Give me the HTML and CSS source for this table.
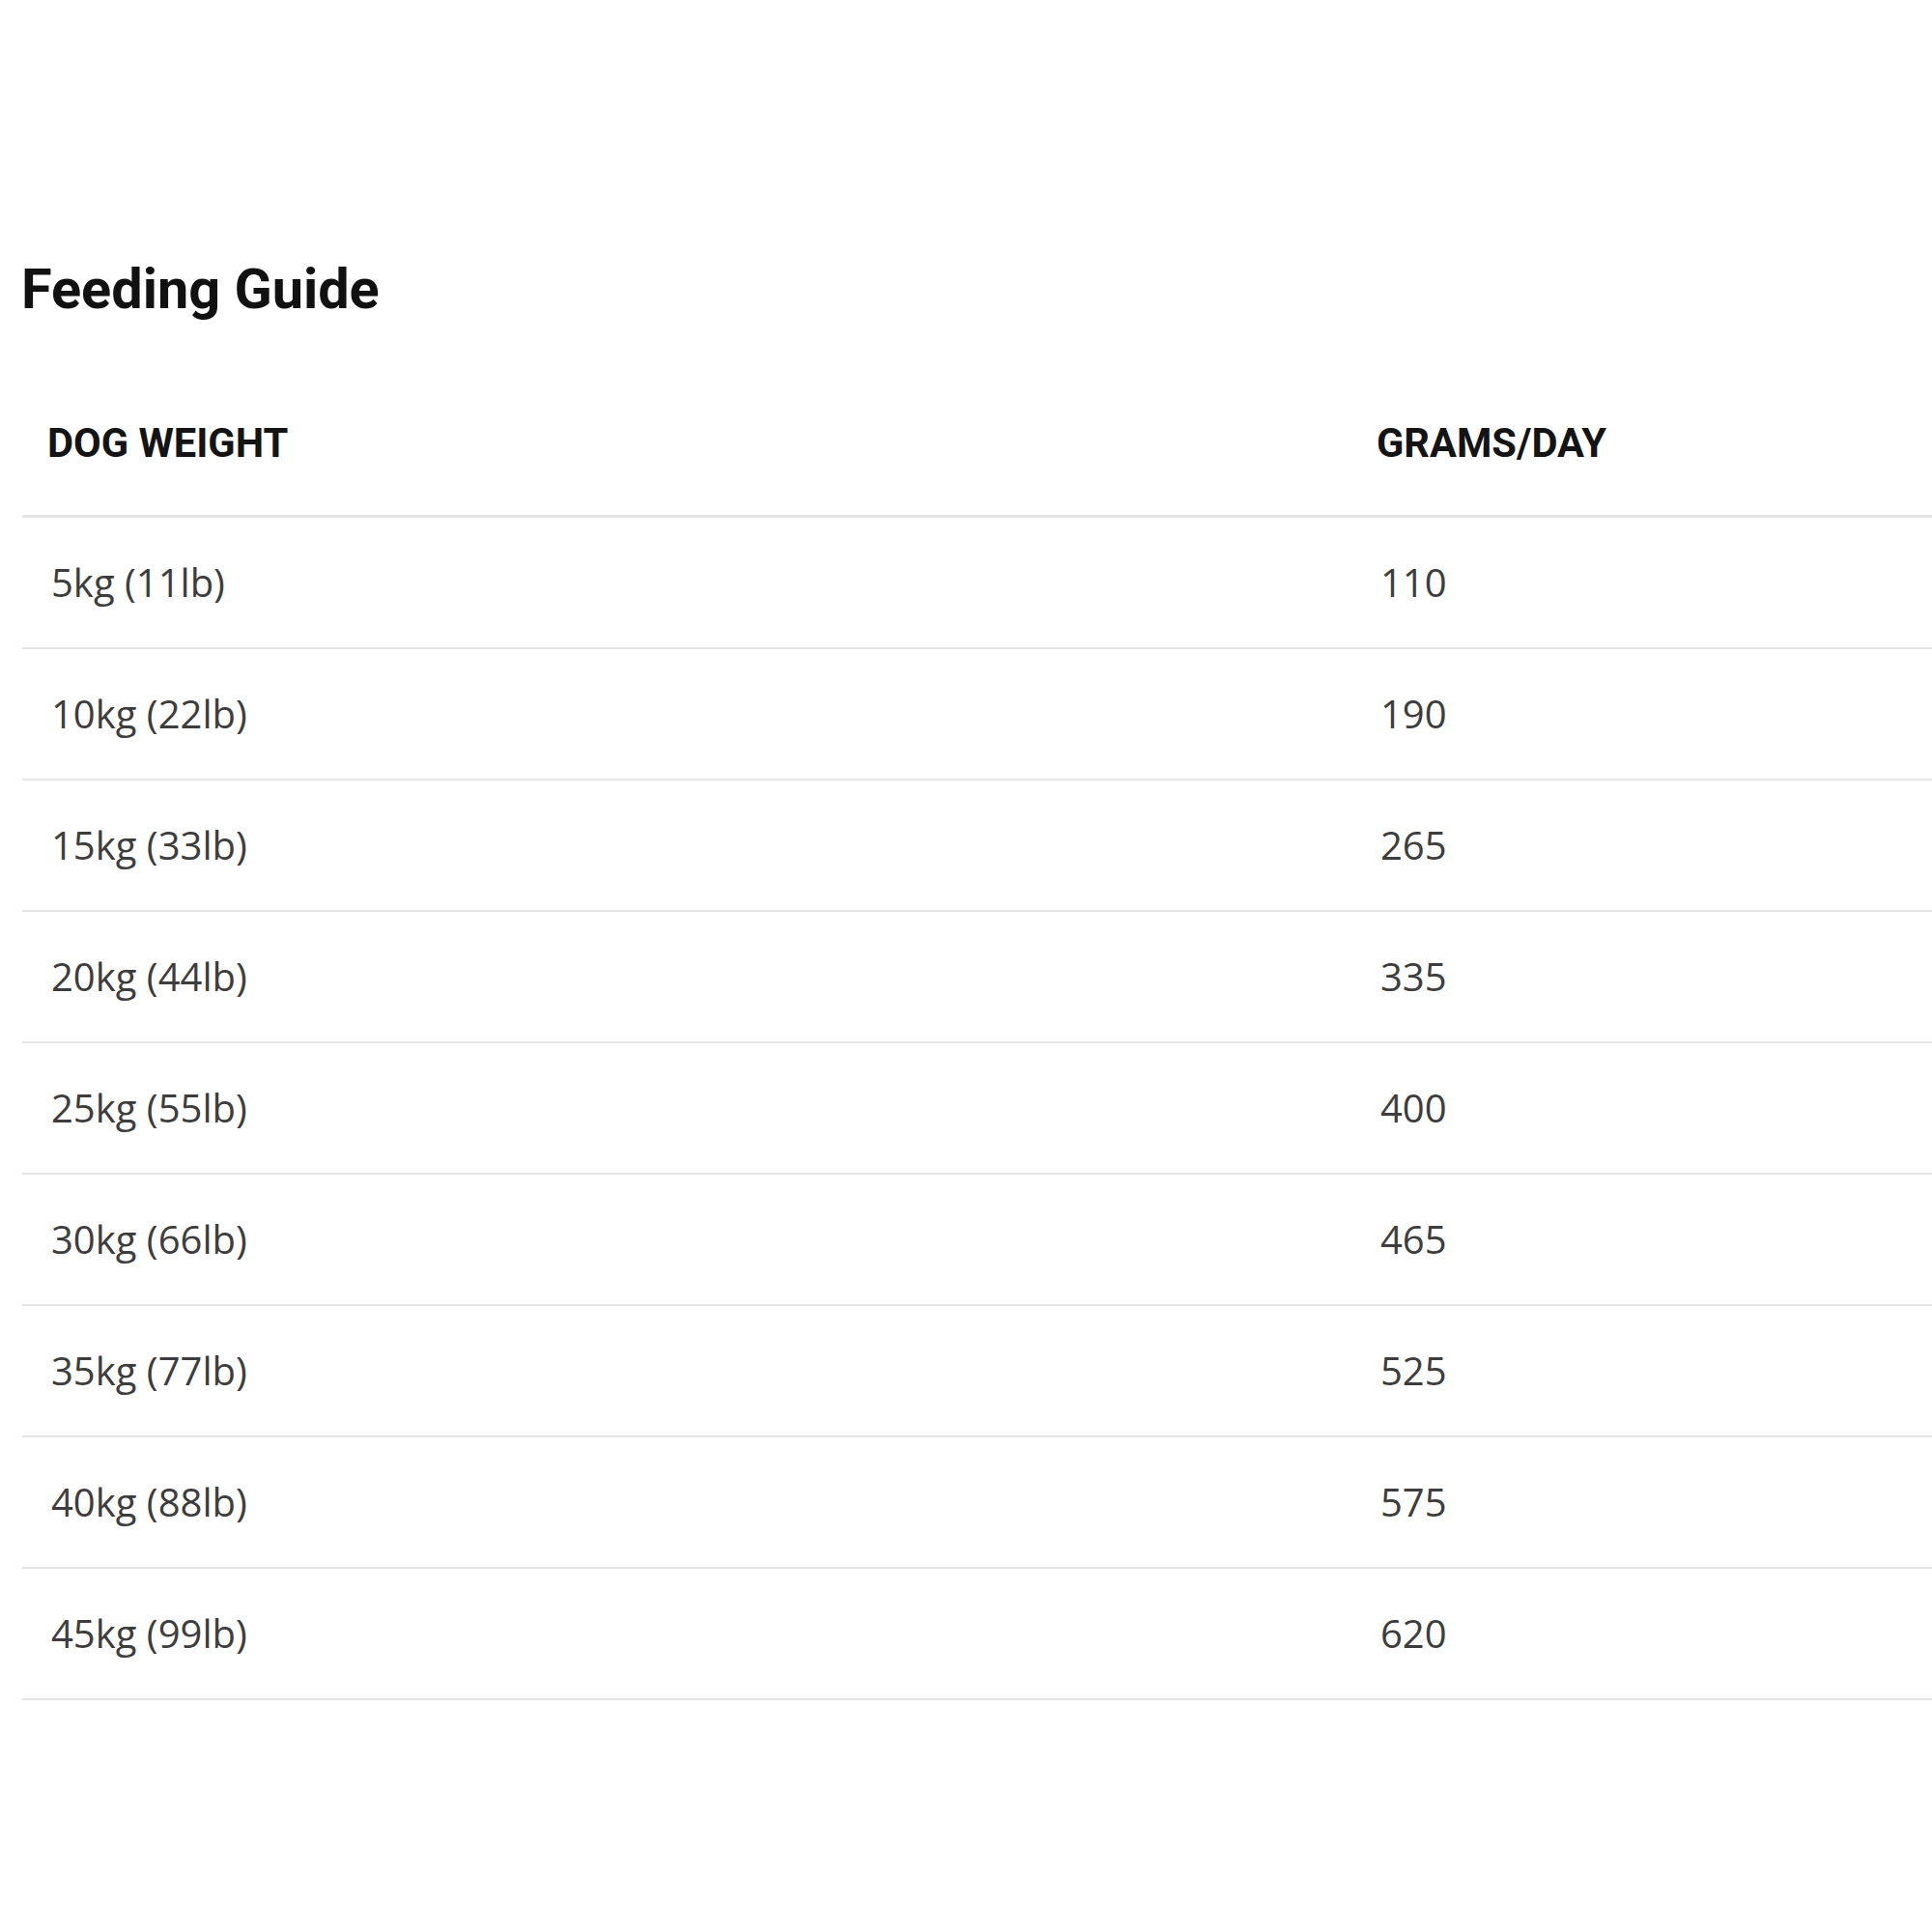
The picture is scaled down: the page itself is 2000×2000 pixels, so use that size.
FILE: index.html
```html
<!DOCTYPE html>
<html lang="en">
<head>
<meta charset="utf-8">
<title>Feeding Guide</title>
<link rel="stylesheet" href="styles.css">
</head>
<body>
<main class="page">
  <h1 class="title">Feeding Guide</h1>
  <table class="guide">
    <thead>
      <tr><th class="col-weight">DOG WEIGHT</th><th>GRAMS/DAY</th></tr>
    </thead>
    <tbody>
      <tr><td>5kg (11lb)</td><td>110</td></tr>
      <tr><td>10kg (22lb)</td><td>190</td></tr>
      <tr><td>15kg (33lb)</td><td>265</td></tr>
      <tr><td>20kg (44lb)</td><td>335</td></tr>
      <tr><td>25kg (55lb)</td><td>400</td></tr>
      <tr><td>30kg (66lb)</td><td>465</td></tr>
      <tr><td>35kg (77lb)</td><td>525</td></tr>
      <tr><td>40kg (88lb)</td><td>575</td></tr>
      <tr><td>45kg (99lb)</td><td>620</td></tr>
    </tbody>
  </table>
</main>
</body>
</html>
```

FILE: styles.css
```css
html, body {
  margin: 0;
  padding: 0;
  background: #ffffff;
}

body {
  overflow: hidden;
}

.page {
  padding: 265px 0 0 23px;
  width: 1977px;
}

.title {
  margin: 0 0 0 -1px;
  font-family: Roboto, "Liberation Sans", sans-serif;
  font-weight: 700;
  font-size: 57.6px;
  line-height: 70px;
  color: #111111;
}

.guide {
  margin-top: 50px;
  width: 1977px;
  border-collapse: collapse;
  table-layout: fixed;
}

.guide th {
  text-align: left;
  font-family: Roboto, "Liberation Sans", sans-serif;
  font-weight: 700;
  font-size: 41.6px;
  line-height: 48px;
  color: #141414;
  height: 148px;
  padding: 0 26px;
  vertical-align: middle;
  border-bottom: 3px solid #e4e4e4;
}

.guide th.col-weight {
  width: 1324px;
}

.guide td {
  font-family: "Open Sans", "Liberation Sans", sans-serif;
  font-weight: 400;
  font-size: 40px;
  line-height: 50px;
  color: #3d3d3d;
  height: 134px;
  padding: 0 29px 0 30px;
  vertical-align: middle;
  border-bottom: 2px solid #e6e6e6;
}
```
